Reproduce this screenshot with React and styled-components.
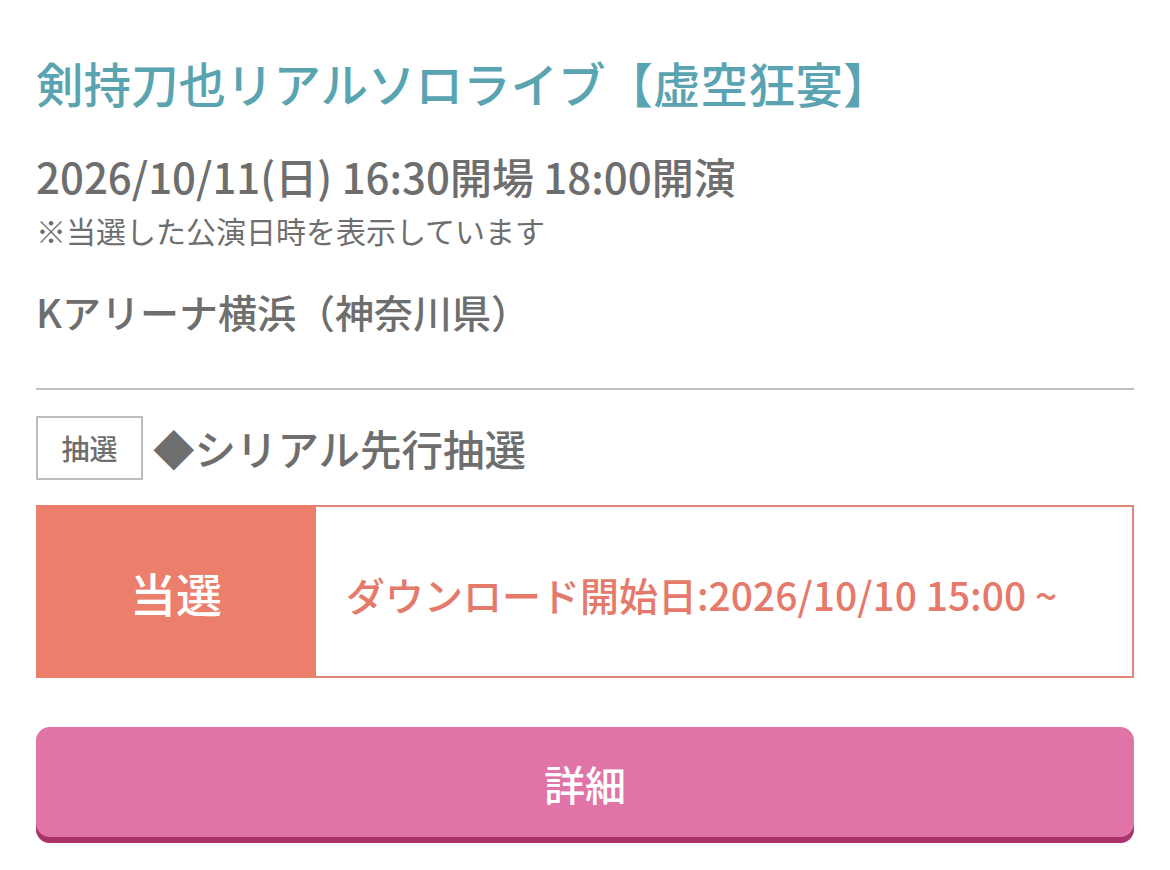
import React from 'react';
import styled, { createGlobalStyle } from 'styled-components';

const GlobalStyle = createGlobalStyle`
  body {
    margin: 0;
    background: #fff;
    font-family: "Noto Sans CJK JP", "Noto Sans", sans-serif;
  }
`;

const Page = styled.div`
  padding: 50px 36px 0 36px;
`;

const Title = styled.h1`
  margin: 0;
  font-size: 47.5px;
  line-height: 66px;
  font-weight: 500;
  color: #5aa4b1;
`;

const DateLine = styled.div`
  margin-top: 33px;
  font-size: 42px;
  line-height: 54px;
  font-weight: 500;
  color: #6e6e6e;
`;

const Note = styled.div`
  margin-top: 7px;
  font-size: 30px;
  line-height: 40px;
  color: #6e6e6e;
`;

const Venue = styled.div`
  margin-top: 35px;
  font-size: 39px;
  line-height: 52px;
  font-weight: 500;
  color: #6e6e6e;
`;

const Divider = styled.hr`
  margin: 51px 0 0 0;
  border: none;
  border-top: 2px solid #c2c2c2;
`;

const LotteryRow = styled.div`
  margin-top: 26px;
  display: flex;
  align-items: center;
  gap: 10px;
`;

const Badge = styled.span`
  box-sizing: border-box;
  width: 107px;
  height: 64px;
  border: 2px solid #bdbdbd;
  display: flex;
  align-items: center;
  justify-content: center;
  font-size: 28px;
  font-weight: 500;
  color: #6e6e6e;
`;

const LotteryName = styled.span`
  font-size: 41.5px;
  font-weight: 500;
  color: #6e6e6e;
`;

const ResultBox = styled.div`
  margin-top: 25px;
  box-sizing: border-box;
  height: 173px;
  border: 2px solid #e08577;
  display: flex;
`;

const Status = styled.div`
  width: 280px;
  margin: -2px 0 -2px -2px;
  background: #ec7f6b;
  color: #fff;
  font-size: 46px;
  font-weight: 500;
  display: flex;
  align-items: center;
  justify-content: center;
`;

const Download = styled.div`
  flex: 1;
  padding-left: 30px;
  padding-top: 4px;
  display: flex;
  align-items: center;
  font-size: 39px;
  font-weight: 500;
  color: #e5796a;
`;

const DetailButton = styled.button`
  margin-top: 49px;
  width: 100%;
  height: 116px;
  border: none;
  border-radius: 14px;
  background: #e074a7;
  box-shadow: inset 0 -6px 0 #a9336a;
  padding-bottom: 6px;
  color: #fff;
  font-family: inherit;
  font-size: 41px;
  font-weight: 500;
  cursor: pointer;
`;

const App = () => {
  return (
    <Page>
      <GlobalStyle />
      <Title>剣持刀也リアルソロライブ【虚空狂宴】</Title>
      <DateLine>2026/10/11(日) 16:30開場 18:00開演</DateLine>
      <Note>※当選した公演日時を表示しています</Note>
      <Venue>Kアリーナ横浜（神奈川県）</Venue>
      <Divider />
      <LotteryRow>
        <Badge>抽選</Badge>
        <LotteryName>◆シリアル先行抽選</LotteryName>
      </LotteryRow>
      <ResultBox>
        <Status>当選</Status>
        <Download>ダウンロード開始日:2026/10/10 15:00 ~</Download>
      </ResultBox>
      <DetailButton>詳細</DetailButton>
    </Page>
  );
};

export default App;
